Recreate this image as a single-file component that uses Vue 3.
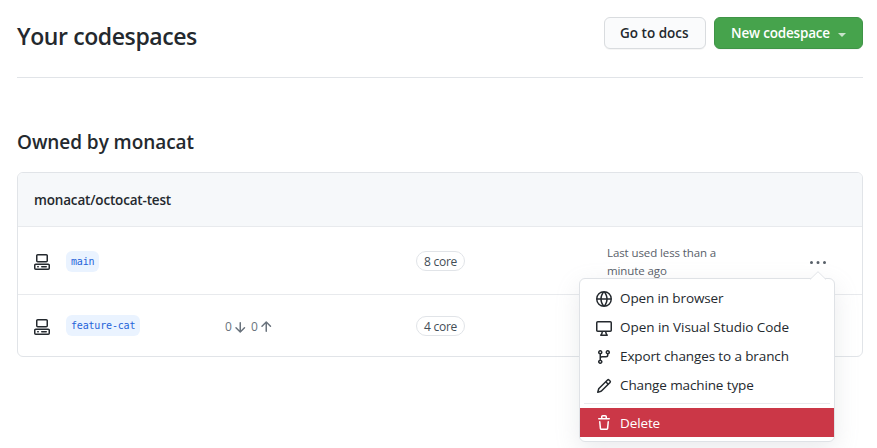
<script setup>
const codespaces = [
  { branch: 'main', machine: '8 core', used: 'Last used less than a minute ago' },
  { branch: 'feature-cat', machine: '4 core', behind: 0, ahead: 0 },
]

const icons = {
  codespace:
    'M2 1.75C2 .784 2.784 0 3.75 0h8.5C13.216 0 14 .784 14 1.75v5a1.75 1.75 0 01-1.75 1.75h-8.5A1.75 1.75 0 012 6.75v-5zm1.75-.25a.25.25 0 00-.25.25v5c0 .138.112.25.25.25h8.5a.25.25 0 00.25-.25v-5a.25.25 0 00-.25-.25h-8.5zM0 11.25c0-.966.784-1.75 1.75-1.75h12.5c.966 0 1.75.784 1.75 1.75v3A1.75 1.75 0 0114.25 16H1.75A1.75 1.75 0 010 14.25v-3zM1.75 11a.25.25 0 00-.25.25v3c0 .138.112.25.25.25h12.5a.25.25 0 00.25-.25v-3a.25.25 0 00-.25-.25H1.75zM7 12.75a.75.75 0 01.75-.75h4.5a.75.75 0 010 1.5h-4.5a.75.75 0 01-.75-.75zm-4 0a.75.75 0 01.75-.75h.5a.75.75 0 010 1.5h-.5a.75.75 0 01-.75-.75z',
  down: 'M13.03 8.22a.75.75 0 010 1.06l-4.25 4.25a.75.75 0 01-1.06 0L3.47 9.28a.75.75 0 011.06-1.06l2.97 2.97V3.75a.75.75 0 011.5 0v7.44l2.97-2.97a.75.75 0 011.06 0z',
  up: 'M3.47 7.78a.75.75 0 010-1.06l4.25-4.25a.75.75 0 011.06 0l4.25 4.25a.75.75 0 01-1.06 1.06L9 4.81v7.44a.75.75 0 01-1.5 0V4.81L4.53 7.78a.75.75 0 01-1.06 0z',
  more: 'M8 9a1.5 1.5 0 100-3 1.5 1.5 0 000 3zM1.5 9a1.5 1.5 0 100-3 1.5 1.5 0 000 3zm13 0a1.5 1.5 0 100-3 1.5 1.5 0 000 3z',
  trash:
    'M6.5 1.75a.25.25 0 01.25-.25h2.5a.25.25 0 01.25.25V3h-3V1.75zm4.5 0V3h2.25a.75.75 0 010 1.5H2.75a.75.75 0 010-1.5H5V1.75C5 .784 5.784 0 6.75 0h2.5C10.216 0 11 .784 11 1.75zM4.496 6.675a.75.75 0 10-1.492.15l.66 6.6A1.75 1.75 0 005.405 15h5.19c.9 0 1.652-.681 1.741-1.576l.66-6.6a.75.75 0 00-1.492-.149l-.66 6.6a.25.25 0 01-.249.225h-5.19a.25.25 0 01-.249-.225l-.66-6.6z',
}

const actions = [
  {
    label: 'Open in browser',
    key: 'browser',
    icon: 'M1.543 7.25h2.733c.144-2.074.866-3.756 1.58-4.948.12-.197.237-.381.353-.552a6.506 6.506 0 00-4.666 5.5zm2.733 1.5H1.543a6.506 6.506 0 004.666 5.5 11.13 11.13 0 01-.352-.552c-.715-1.192-1.437-2.874-1.581-4.948zm1.504 0h4.44a9.637 9.637 0 01-1.363 4.177c-.306.51-.612.919-.857 1.215a9.978 9.978 0 01-.857-1.215A9.637 9.637 0 015.78 8.75zm4.44-1.5H5.78a9.637 9.637 0 011.363-4.177c.306-.51.612-.919.857-1.215.245.296.55.705.857 1.215A9.638 9.638 0 0110.22 7.25zm1.504 1.5c-.144 2.074-.866 3.756-1.58 4.948-.12.197-.237.381-.353.552a6.506 6.506 0 004.666-5.5h-2.733zm2.733-1.5h-2.733c-.144-2.074-.866-3.756-1.58-4.948a11.738 11.738 0 00-.353-.552 6.506 6.506 0 014.666 5.5zM8 0a8 8 0 100 16A8 8 0 008 0z',
  },
  {
    label: 'Open in Visual Studio Code',
    key: 'editor',
    icon: 'M1.75 2.5h12.5a.25.25 0 01.25.25v7.5a.25.25 0 01-.25.25H1.75a.25.25 0 01-.25-.25v-7.5a.25.25 0 01.25-.25zM14.25 1H1.75A1.75 1.75 0 000 2.75v7.5C0 11.216.784 12 1.75 12h3.727c-.1 1.041-.52 1.872-1.292 2.757A.75.75 0 004.75 16h6.5a.75.75 0 00.565-1.243c-.772-.885-1.193-1.716-1.292-2.757h3.727A1.75 1.75 0 0016 10.25v-7.5A1.75 1.75 0 0014.25 1zM9.018 12H6.982a5.72 5.72 0 01-.765 2.5h3.566a5.72 5.72 0 01-.765-2.5z',
  },
  {
    label: 'Export changes to a branch',
    key: 'export',
    icon: 'M11.75 2.5a.75.75 0 100 1.5.75.75 0 000-1.5zm-2.25.75a2.25 2.25 0 113 2.122V6A2.5 2.5 0 0110 8.5H6a1 1 0 00-1 1v1.128a2.251 2.251 0 11-1.5 0V5.372a2.25 2.25 0 111.5 0v1.836A2.492 2.492 0 016 7h4a1 1 0 001-1v-.628A2.25 2.25 0 019.5 3.25zM4.25 12a.75.75 0 100 1.5.75.75 0 000-1.5zM3.5 3.25a.75.75 0 111.5 0 .75.75 0 01-1.5 0z',
  },
  {
    label: 'Change machine type',
    key: 'machine-type',
    icon: 'M11.013 1.427a1.75 1.75 0 012.474 0l1.086 1.086a1.75 1.75 0 010 2.474l-8.61 8.61c-.21.21-.47.364-.756.445l-3.251.93a.75.75 0 01-.927-.928l.929-3.25a1.75 1.75 0 01.445-.758l8.61-8.61zm1.414 1.06a.25.25 0 00-.354 0L10.811 3.75l1.439 1.44 1.263-1.263a.25.25 0 000-.354l-1.086-1.086zM11.189 6.25L9.75 4.81l-6.286 6.287a.25.25 0 00-.064.108l-.558 1.953 1.953-.558a.249.249 0 00.108-.064l6.286-6.286z',
  },
]
</script>

<template>
  <main class="page">
    <header class="top">
      <h1><span>Your codespaces</span></h1>
      <div class="buttons">
        <button class="btn docs"><span>Go to docs</span></button>
        <button class="btn primary"><span>New codespace</span><i class="caret"></i></button>
      </div>
    </header>

    <h2><span>Owned by monacat</span></h2>

    <section class="box">
      <div class="box-head"><span>monacat/octocat-test</span></div>
      <div v-for="c in codespaces" :key="c.branch" class="row">
        <svg class="icon" viewBox="0 0 16 16"><path fill-rule="evenodd" :d="icons.codespace" /></svg>
        <div class="branch"><code>{{ c.branch }}</code></div>
        <div class="sync">
          <template v-if="c.ahead !== undefined">
            <span>{{ c.behind }}</span>
            <svg viewBox="0 0 16 16"><path :d="icons.down" /></svg>
            <span class="ahead">{{ c.ahead }}</span>
            <svg viewBox="0 0 16 16"><path :d="icons.up" /></svg>
          </template>
        </div>
        <div class="machine"><span class="label">{{ c.machine }}</span></div>
        <div class="used"><span>{{ c.used }}</span></div>
        <div class="more">
          <svg v-if="c.used" viewBox="0 0 16 16"><path :d="icons.more" /></svg>
        </div>
      </div>
    </section>

    <div class="menu">
      <svg class="pointer" viewBox="0 0 16 9"><path d="M0 8.5L8 .7l8 7.8V9H0z" fill="#fff" /><path d="M0 8.5L8 .7l8 7.8" fill="none" stroke="#e1e4e8" /></svg>
      <div v-for="a in actions" :key="a.key" class="item" :class="a.key">
        <svg class="icon" viewBox="0 0 16 16"><path fill-rule="evenodd" :d="a.icon" /></svg>
        <span>{{ a.label }}</span>
      </div>
      <div class="divider"></div>
      <div class="item danger">
        <svg class="icon" viewBox="0 0 16 16"><path fill-rule="evenodd" :d="icons.trash" /></svg>
        <span>Delete</span>
      </div>
    </div>
  </main>
</template>

<style>
body { background: #fff; }
</style>

<style scoped>
* { box-sizing: border-box; }
.page {
  position: relative;
  width: 877px;
  height: 448px;
  padding: 17px 14px 0 17px;
  overflow: hidden;
  color: #24292e;
  font: 14px/20px "Open Sans", "Noto Sans", sans-serif;
  white-space: nowrap;
}
.top {
  display: flex;
  justify-content: space-between;
  height: 61px;
  border-bottom: 1px solid #e1e4e8;
}
h1, h2 { margin: 0; font-weight: 550; }
h1 { font-size: 23px; line-height: 38px; letter-spacing: -0.4px; }
h2 { margin-top: 51px; height: 43px; font-size: 19px; line-height: 26px; letter-spacing: -0.06px; }
.buttons { display: flex; gap: 8px; }
.btn {
  display: flex;
  align-items: center;
  height: 32px;
  padding: 0 16px;
  border: 1px solid #d9dcdf;
  border-radius: 6px;
  background: #fafbfc;
  color: #24292e;
  font: 550 13.5px/20px "Open Sans", sans-serif;
  box-shadow: 0 1px 0 rgba(27, 31, 35, .04);
}
.docs { width: 102px; padding: 0 15px; }
.primary { width: 149px; border-color: #3f9447; background: #46a34c; color: #fff; font-weight: 600; letter-spacing: -0.18px; }
.caret {
  margin-left: 8px;
  margin-top: 3px;
  border: 4px solid transparent;
  border-top-color: #c8e3ca;
  border-bottom: 0;
}
.box {
  height: 185px;
  border: 1px solid #e1e4e8;
  border-radius: 6px;
  overflow: hidden;
}
.box-head {
  height: 53px;
  padding: 17px 16px;
  background: #f6f8fa;
  font-weight: 600;
  font-size: 13.5px;
  letter-spacing: -0.17px;
}
.row {
  display: grid;
  grid-template-columns: 32px 159px 191px 191px 203px 1fr;
  align-items: center;
  height: 68px;
  padding-left: 16px;
  padding-top: 2px;
  border-top: 1px solid #e8eaed;
}
.row:last-child { height: 62px; }
.icon { display: block; width: 16px; height: 16px; fill: #24292e; }
.branch { display: flex; padding-bottom: 1px; }
.row:last-child .branch { padding-bottom: 3px; }
code {
  height: 21px;
  padding: 0 5px;
  border-radius: 6px;
  background: #eaf3ff;
  color: #2563d9;
  font: 10px/21px "DejaVu Sans Mono", monospace;
  letter-spacing: -0.18px;
}
.sync { display: flex; align-items: center; color: #6a737d; font-size: 12px; }
.sync svg { width: 16px; height: 16px; fill: #6a737d; }
.ahead { margin-left: 3px; }
.label {
  display: inline-block;
  height: 20px;
  padding: 0 7px;
  border: 1px solid #e1e4e8;
  border-radius: 10px;
  color: #444d56;
  font-size: 12px;
  line-height: 19px;
  letter-spacing: -0.25px;
}
.machine { display: flex; padding-bottom: 1px; }
.used { width: 125px; padding-top: 1px; color: #586069; font-size: 11.5px; line-height: 18px; letter-spacing: -0.1px; white-space: normal; }
.more { padding-top: 2px; }
.more svg { display: block; width: 16px; height: 16px; fill: #586069; }
.menu {
  position: absolute;
  left: 579px;
  top: 278px;
  width: 256px;
  height: 164px;
  padding-top: 5px;
  border: 1px solid #dfe2e6;
  border-radius: 6px;
  background: #fff;
  box-shadow: 0 8px 24px rgba(149, 157, 165, .2);
}
.pointer { position: absolute; left: 230px; top: -8px; width: 16px; height: 9px; }
.item {
  display: flex;
  align-items: center;
  gap: 8px;
  height: 29px;
  padding-left: 16px;
  font-size: 13.5px;
  letter-spacing: -0.12px;
}
.item span { padding-bottom: 1px; }
.item.editor span { letter-spacing: -0.04px; }
.divider { height: 1px; margin: 3px 4px 4px; background: #e8eaed; }
.danger { background: #cb3747; color: #fff; }
.item.danger span { padding: 1px 0 0; }
.danger .icon { fill: #fff; }
</style>
